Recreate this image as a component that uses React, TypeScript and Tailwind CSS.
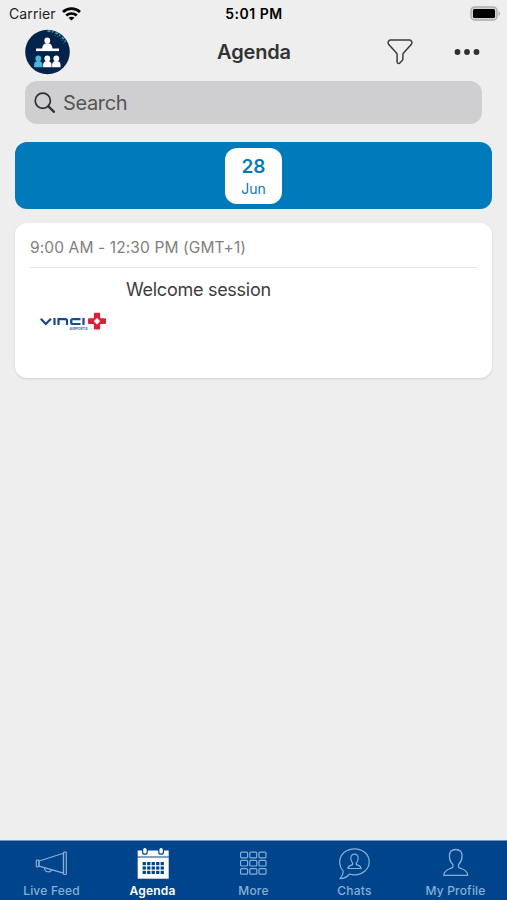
import type { ReactNode } from "react";

function WifiIcon() {
  return (
    <svg width="19" height="14" viewBox="0 0 19 14" fill="none" stroke="#000" strokeWidth="2.7">
      <path d="M1 5C5.800.6 13.200.6 18 5" />
      <path d="M4.200 8.600c3-2.800 7.600-2.800 10.600 0" />
      <path d="M9.500 13.600 6.500 10.800c1.700-1.500 4.300-1.500 6 0z" fill="#000" stroke="none" />
    </svg>
  );
}

function BatteryIcon() {
  return (
    <svg width="31" height="16" viewBox="0 0 31 16">
      <rect x="1" y="1" width="26" height="13" rx="3.8" fill="#d4d4d4" stroke="#adadad" strokeWidth="1.400" />
      <rect x="3" y="3" width="22" height="9" rx="1.500" fill="#000" />
      <path d="M28.600 5.200c1.700.7 1.700 4 0 4.700z" fill="#a5a5a5" />
    </svg>
  );
}

function EventLogo() {
  return (
    <svg width="46" height="46" viewBox="0 0 46 46">
      <circle cx="22.500" cy="23" r="22.300" fill="#04234a" />
      <path d="M22.500 2c8 .3 14 4 18.500 11.500" fill="none" stroke="#2d9bb0" strokeWidth="1.800" strokeDasharray="3 1.500 1.500 2" />
      <path d="M29.500 6c5 2 8 5 10 9" fill="none" stroke="#1b7188" strokeWidth="1.200" strokeDasharray="1 2" />
      <circle cx="22.300" cy="11.500" r="2.900" fill="#fff" />
      <path d="M17.200 20c0-3.900 1.700-5.800 5.100-5.800s5.100 1.900 5.100 5.800z" fill="#fff" />
      <rect x="11" y="19.500" width="23" height="2.600" fill="#fff" />
      {[13.3, 22.3, 31.3].map((x, i) => (
        <g key={x} fill={i === 0 ? "#4db5d6" : "#fff"}>
          <circle cx={x} cy="29.500" r="2.900" />
          <path d={`M${x - 4.2} 38.300v-2.600c0-2.500 1.400-3.800 4.200-3.800s4.200 1.300 4.200 3.800v2.600z`} />
        </g>
      ))}
    </svg>
  );
}

function FilterIcon() {
  return (
    <svg width="26" height="26" viewBox="0 0 26 26" fill="none" stroke="#3c3c3c" strokeWidth="1.500" strokeLinejoin="round">
      <path d="M3.500 1h19c2.300 0 3 3 1.700 4.600L16.500 14c-.5.600-.6 1-.6 1.800v4c0 .7-.2 1.200-.7 1.700l-2.400 2.500c-1 1-2.700.4-2.700-1.100v-7.100c0-.8-.1-1.200-.6-1.800L1.800 5.600C.5 4 1.200 1 3.500 1z" />
    </svg>
  );
}

function VinciLogo() {
  return (
    <svg width="67" height="19" viewBox="0 0 67 19">
      <g fill="none" stroke="#174a8c" strokeWidth="2.200">
        <path d="M.8 6.800 5.800 12 11 6.800M14.500 6v7M18.500 13V7.100h6.700q1.800 0 1.800 1.700V13M40.500 7.100h-7.300q-2 0-2 1.400v2q0 1.500 2 1.500h7.300M43.500 6v7" />
      </g>
      <g fill="#dd1f3b">
        <rect x="53.900" y=".8" width="6.200" height="5.800" rx="1" />
        <rect x="53.900" y="11.800" width="6.200" height="5.800" rx="1" />
        <rect x="48" y="6.300" width="5.800" height="5.800" rx="1" />
        <rect x="60.200" y="6.300" width="5.800" height="5.800" rx="1" />
        <path d="m57 2.700 6.500 6.500-6.500 6.500-6.500-6.500z" />
      </g>
      <path d="m57 6 3.200 3.200-3.200 3.200-3.200-3.200z" fill="#fff" />
      <text x="29.500" y="18" fontFamily="Inter, sans-serif" fontSize="4" fontWeight="700" fill="#3a709f" textLength="18" lengthAdjust="spacingAndGlyphs">AIRPORTS</text>
    </svg>
  );
}

function MegaphoneIcon() {
  return (
    <svg width="34" height="32" viewBox="0 0 34 32" fill="none" stroke="currentColor" strokeWidth="1.200" strokeLinejoin="round">
      <path d="M4 13 28.500 5.200v19.900L4 18.100z" />
      <rect x="1.300" y="12.200" width="2.700" height="6.600" rx=".8" />
      <rect x="28.500" y="4.200" width="2.800" height="22.300" rx=".8" />
      <path d="M9.500 20c.3 4.800 6.300 4.600 7.200 2" />
    </svg>
  );
}

function CalendarIcon() {
  return (
    <svg width="34" height="32" viewBox="0 0 34 32" fill="currentColor">
      <path d="M1.700 2.500h31v6h-31z" />
      <rect x="6" y="-2" width="5.800" height="8.800" rx="2.900" fill="#00458b" />
      <rect x="22.200" y="-2" width="5.800" height="8.800" rx="2.900" fill="#00458b" />
      <rect x="7.200" y="0" width="3.400" height="5.600" rx="1.600" />
      <rect x="23.400" y="0" width="3.400" height="5.600" rx="1.600" />
      <path d="M1.700 9.500h31v21.200h-31z" />
      {[14, 18.4, 22.8].map(y => [6.6, 11.1, 15.6, 20.1, 24.6].map(x => (
        <rect key={`${x}-${y}`} x={x} y={y} width="3.300" height="3.200" fill="#00458b" />
      )))}
    </svg>
  );
}

function GridIcon() {
  return (
    <svg width="34" height="32" viewBox="0 0 34 32" fill="none" stroke="currentColor" strokeWidth="1.200">
      {[4.2, 12.4, 20.6].map(y => [3.6, 12.8, 22].map(x => (
        <rect key={`${x}-${y}`} x={x} y={y} width="7" height="5.600" rx="1" />
      )))}
    </svg>
  );
}

function ChatIcon() {
  return (
    <svg width="34" height="32" viewBox="0 0 34 32" fill="none" stroke="currentColor" strokeWidth="1.200" strokeLinejoin="round">
      <g transform="translate(-1)">
        <path d="M17.500.8c8.300 0 14.700 5.700 14.700 13s-6.400 13-14.700 13c-1.800 0-3.400-.2-5-.8-2.300 2.700-5.600 4.700-9.500 4.700 1.800-2 3.300-4.500 3.300-7.500-2.300-2.500-3.600-5.700-3.600-9.400C2.700 6.500 9.200.8 17.500.8z" />
        <path d="M17.500 6.200c-2.400 0-3.800 1.600-3.700 4 .1 2 .8 3.700 1.800 4.800v1.600c-1.800.9-4.600 1-4.700 3.900h13.200c-.1-2.900-2.900-3-4.700-3.900V15c1-1.100 1.700-2.800 1.800-4.800.1-2.400-1.300-4-3.700-4z" />
      </g>
    </svg>
  );
}

function ProfileIcon() {
  return (
    <svg width="34" height="32" viewBox="0 0 34 32" fill="none" stroke="currentColor" strokeWidth="1.300" strokeLinejoin="round">
      <path d="M16.700 1.500c-4.200 0-6.500 2.600-6.300 6.600.1 3.300 1.300 6.200 3.300 8.200.5.500.5 2.500-.2 3.100-2.600 2-8.300 1.600-8.700 7.900h23.900c-.4-6.300-6.100-5.900-8.700-7.900-.7-.6-.7-2.600-.2-3.100 2-2 3.200-4.900 3.300-8.200.2-4-2.200-6.600-6.400-6.600z" />
    </svg>
  );
}

const TABS: { label: string; icon: ReactNode; active?: boolean }[] = [
  { label: "Live Feed",  icon: <MegaphoneIcon /> },
  { label: "Agenda",     icon: <CalendarIcon />, active: true },
  { label: "More",       icon: <GridIcon /> },
  { label: "Chats",      icon: <ChatIcon /> },
  { label: "My Profile", icon: <ProfileIcon /> },
];

export default function App() {
  return (
    <div className="flex h-[900px] w-full flex-col overflow-hidden bg-[#eeeeee] font-['Inter',sans-serif]">
      <div className="grid h-7 shrink-0 grid-cols-3 items-center pl-[7px] pr-1.5 text-black">
        <div className="flex items-center gap-1.5 pl-0.5">
          <span className="text-[14px] leading-none tracking-[0.1px] text-[#222]">Carrier</span>
          <WifiIcon />
        </div>
        <span className="text-center text-[14px] font-semibold leading-none tracking-[0.5px]">5:01 PM</span>
        <div className="flex justify-end"><BatteryIcon /></div>
      </div>

      <header className="grid h-[53px] shrink-0 grid-cols-3 pl-[25px] pr-[26px]">
        <div className="pt-[1px]"><EventLogo /></div>
        <h1 className="pl-0.5 pt-2.5 text-center text-[20px] font-semibold leading-7 tracking-[-0.15px] text-[#333]">Agenda</h1>
        <div className="flex items-start justify-end gap-[41px] pt-[11px]">
          <FilterIcon />
          <svg className="mt-2.5" width="27" height="6" viewBox="0 0 27 6" fill="#303030">
            <circle cx="3.500" cy="3" r="2.900" />
            <circle cx="13" cy="3" r="2.900" />
            <circle cx="22.500" cy="3" r="2.900" />
          </svg>
        </div>
      </header>

      <div className="mx-[25px] flex h-[43px] shrink-0 items-center gap-[7px] rounded-xl bg-[#cfcfd1] pl-[9px]">
        <svg width="22" height="22" viewBox="0 0 22 22" fill="none" stroke="#303030" strokeWidth="1.700" strokeLinecap="round">
          <circle cx="8.800" cy="8.800" r="7.600" />
          <path d="m14.400 14.400 5.600 5.400" strokeWidth="2.300" />
        </svg>
        <span className="text-[20px] leading-none tracking-[-0.35px] text-[#555]">Search</span>
      </div>

      <div className="mx-[15px] mt-[18px] flex h-[67px] shrink-0 items-center justify-center rounded-xl bg-[#007aba]">
        <div className="flex h-14 w-[57px] flex-col items-center rounded-xl bg-white pt-[7px] text-[#0878b8]">
          <span className="text-[19px] font-semibold leading-6">28</span>
          <span className="text-[14px] leading-5">Jun</span>
        </div>
      </div>

      <div className="mx-[15px] mt-3.5 h-[155px] shrink-0 rounded-xl bg-white px-[15px] shadow-sm">
        <div className="flex h-[45px] items-center border-b border-[#e5e5e5] pt-1.5 text-[15.5px] leading-none tracking-[0.12px] text-[#808080]">
          9:00 AM - 12:30 PM (GMT+1)
        </div>
        <div className="flex gap-[19px] pl-2.5">
          <div className="pt-[44px]"><VinciLogo /></div>
          <p className="pt-2 text-[18px] leading-7 tracking-[-0.27px] text-[#3d3d3d]">Welcome session</p>
        </div>
      </div>

      <nav className="mt-auto grid h-[60px] shrink-0 grid-cols-5 border-t border-[#6f95b9] bg-[#00458b] px-[1px]">
        {TABS.map(t => (
          <div key={t.label} className={`flex flex-col items-center pt-[7px] text-[12px] ${t.active ? "font-semibold text-white" : "font-medium text-[#86afd6]"}`}>
            {t.icon}
            <span className="mt-[3px] leading-4 tracking-[0.2px]">{t.label}</span>
          </div>
        ))}
      </nav>
    </div>
  );
}
